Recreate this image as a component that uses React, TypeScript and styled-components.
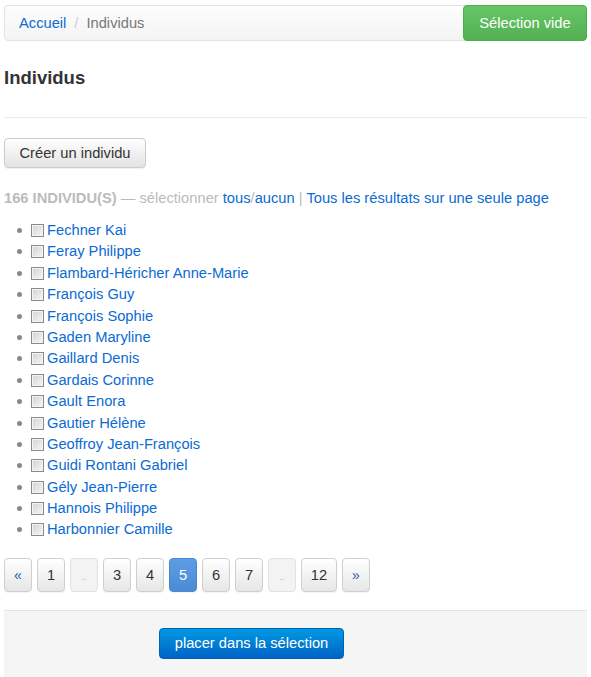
import React from "react";
import styled, { createGlobalStyle } from "styled-components";

const GlobalStyle = createGlobalStyle`
  body {
    margin: 0;
    background: #fff;
    font-family: "Liberation Sans", Arial, sans-serif;
    font-size: 14.7px;
    color: #333;
  }
`;

const StyledPage = styled.div`
  padding: 5px 4px 0;
`;

const StyledBreadcrumbBar = styled.div`
  display: flex;
  align-items: center;
  justify-content: space-between;
  height: 36px;
  box-sizing: border-box;
  border: 1px solid #e3e3e3;
  border-radius: 4px;
  background: linear-gradient(to bottom, #fdfdfd 0%, #f4f4f4 100%);
`;

const StyledCrumbs = styled.div`
  padding-left: 14px;
  color: #777;
  line-height: 20px;
`;

const StyledSeparator = styled.span`
  color: #ccc;
  padding: 0 8px;
`;

const StyledLink = styled.a`
  color: #0b6bd3;
  text-decoration: none;
`;

const StyledSuccessButton = styled.button`
  height: 36px;
  margin-right: -1px;
  padding: 0;
  border: 1px solid #4cae4c;
  border-radius: 4px;
  background: linear-gradient(to bottom, #66c666 0%, #52b052 100%);
  color: #fff;
  font-family: inherit;
  font-size: 14.7px;
  width: 124px;
`;

const StyledHeader = styled.div`
  margin-top: 27px;
  padding-bottom: 29px;
  border-bottom: 1px solid #eaeaea;
`;

const StyledTitle = styled.h1`
  margin: 0;
  font-size: 18.5px;
  line-height: 20px;
  font-weight: 700;
  color: #333;
`;

const StyledDefaultButton = styled.button`
  margin-top: 20px;
  height: 30px;
  width: 142px;
  padding: 0;
  border: 1px solid #ccc;
  border-radius: 4px;
  background: linear-gradient(to bottom, #ffffff 0%, #e3e3e3 100%);
  box-shadow: 0 1px 1px rgba(0, 0, 0, 0.06);
  color: #333;
  font-family: inherit;
  font-size: 14.7px;
`;

const StyledSummary = styled.div`
  margin-top: 20px;
  line-height: 20px;
  color: #bbb;
`;

const StyledCount = styled.strong`
  font-weight: 700;
`;

const StyledList = styled.ul`
  margin: 12px 0 0;
  padding-left: 13px;
  list-style: none;
`;

const StyledItem = styled.li`
  line-height: 21.4px;
  height: 21.4px;

  &::before {
    content: "";
    display: inline-block;
    width: 5px;
    height: 5px;
    border-radius: 50%;
    background: #888;
    margin-right: 5px;
    vertical-align: 2px;
  }
`;

const StyledCheckbox = styled.input`
  appearance: none;
  width: 13px;
  height: 13px;
  margin: 0 3px 0 4px;
  vertical-align: -2px;
  border: 1px solid #8a8a8a;
  background: linear-gradient(135deg, #d2d2d2 0%, #f6f6f6 100%);
  box-shadow: inset 0 0 0 1px #f4f4f4;
`;

const StyledPagination = styled.div`
  display: flex;
  gap: 5px;
  margin-top: 17px;
`;

const StyledPageButton = styled.span<{ $active?: boolean; $disabled?: boolean; $wide?: boolean }>`
  display: flex;
  align-items: center;
  justify-content: center;
  box-sizing: border-box;
  width: ${(p) => (p.$wide ? "36px" : "28px")};
  height: 34px;
  border-radius: 4px;
  border: 1px solid
    ${(p) => (p.$active ? "#4a87cf" : p.$disabled ? "#e2e2e2" : "#cfcfcf")};
  background: ${(p) =>
    p.$active
      ? "linear-gradient(to bottom, #5b9de3 0%, #4b8bd6 100%)"
      : p.$disabled
      ? "#f3f3f3"
      : "linear-gradient(to bottom, #ffffff 0%, #e6e6e6 100%)"};
  color: ${(p) => (p.$active ? "#fff" : p.$disabled ? "#aaa" : "#333")};
  font-size: ${(p) => (p.$disabled ? "9px" : "14.7px")};
  padding-top: ${(p) => (p.$disabled ? "5px" : "0")};
  box-shadow: ${(p) => (p.$disabled ? "none" : "0 1px 1px rgba(0,0,0,0.05)")};
`;

const StyledArrow = styled.span`
  color: #2d5f9e;
  font-size: 14px;
`;

const StyledFooter = styled.div`
  margin-top: 18px;
  border-top: 1px solid #e3e3e3;
  background: #f5f5f5;
  padding: 17px 0 20px 155px;
`;

const StyledPrimaryButton = styled.button`
  height: 31px;
  width: 185px;
  padding: 0;
  border: 1px solid #0060b6;
  border-radius: 4px;
  background: linear-gradient(to bottom, #0099e2 0%, #0063c6 100%);
  color: #fff;
  font-family: inherit;
  font-size: 14.7px;
`;

const people = [
  "Fechner Kai",
  "Feray Philippe",
  "Flambard-Héricher Anne-Marie",
  "François Guy",
  "François Sophie",
  "Gaden Maryline",
  "Gaillard Denis",
  "Gardais Corinne",
  "Gault Enora",
  "Gautier Hélène",
  "Geoffroy Jean-François",
  "Guidi Rontani Gabriel",
  "Gély Jean-Pierre",
  "Hannois Philippe",
  "Harbonnier Camille",
];

type TPage = { label: string; active?: boolean; disabled?: boolean; arrow?: boolean };

const pages: TPage[] = [
  { label: "«", arrow: true },
  { label: "1" },
  { label: "..", disabled: true },
  { label: "3" },
  { label: "4" },
  { label: "5", active: true },
  { label: "6" },
  { label: "7" },
  { label: "..", disabled: true },
  { label: "12" },
  { label: "»", arrow: true },
];

const App = () => {
  return (
    <StyledPage>
      <GlobalStyle />
      <StyledBreadcrumbBar>
        <StyledCrumbs>
          <StyledLink href="#">Accueil</StyledLink>
          <StyledSeparator>/</StyledSeparator>
          Individus
        </StyledCrumbs>
        <StyledSuccessButton>Sélection vide</StyledSuccessButton>
      </StyledBreadcrumbBar>

      <StyledHeader>
        <StyledTitle>Individus</StyledTitle>
      </StyledHeader>

      <StyledDefaultButton>Créer un individu</StyledDefaultButton>

      <StyledSummary>
        <StyledCount>166 INDIVIDU(S)</StyledCount> — sélectionner{" "}
        <StyledLink href="#">tous</StyledLink>/<StyledLink href="#">aucun</StyledLink> |{" "}
        <StyledLink href="#">Tous les résultats sur une seule page</StyledLink>
      </StyledSummary>

      <StyledList>
        {people.map((name) => (
          <StyledItem key={name}>
            <StyledCheckbox type="checkbox" />
            <StyledLink href="#">{name}</StyledLink>
          </StyledItem>
        ))}
      </StyledList>

      <StyledPagination>
        {pages.map((page, index) => (
          <StyledPageButton
            key={index}
            $active={page.active}
            $disabled={page.disabled}
            $wide={page.label.length === 2 && !page.disabled}
          >
            {page.arrow ? <StyledArrow>{page.label}</StyledArrow> : page.label}
          </StyledPageButton>
        ))}
      </StyledPagination>

      <StyledFooter>
        <StyledPrimaryButton>placer dans la sélection</StyledPrimaryButton>
      </StyledFooter>
    </StyledPage>
  );
};

export default App;
